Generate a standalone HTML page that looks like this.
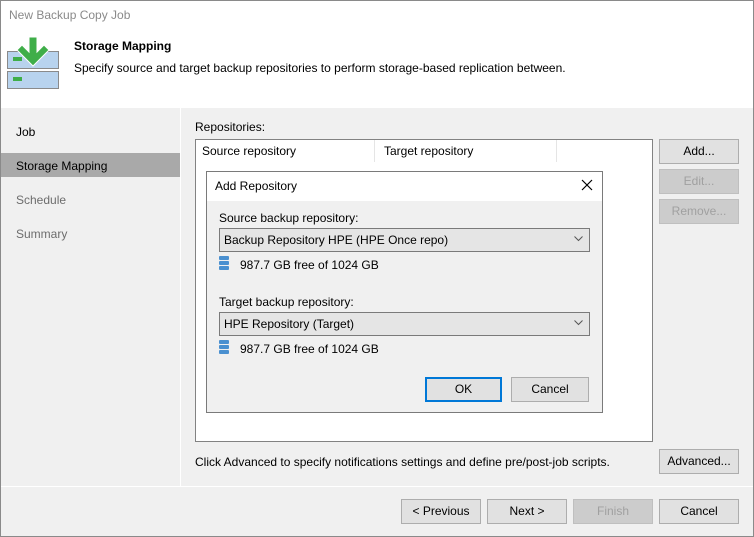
<!DOCTYPE html>
<html><head><style>
*{box-sizing:border-box;margin:0;padding:0}
body{width:754px;height:537px;overflow:hidden;font-family:"Liberation Sans",sans-serif;font-size:12px;color:#000;background:#f0f0f0;position:relative}
.a{position:absolute}
.btn{position:absolute;height:25px;border:1px solid #adadad;background:#e1e1e1;text-align:center;line-height:23px;font-size:12px}
.dis{color:#a0a0a0;background:#cccccc;border-color:#bfbfbf}
.sel{position:absolute;height:24px;border:1px solid #7a7a7a;background:#e5e5e5;line-height:22px;padding-left:4px}
.chev{position:absolute;right:6px;top:7px}
</style></head><body>
<div class="a" style="left:0;top:0;width:754px;height:537px;border:1px solid #8a8a8a"></div>
<div class="a" style="left:1px;top:1px;width:752px;height:107px;background:#fff"></div>
<div class="a" style="left:9px;top:8px;color:#8a8a8a;font-size:12px">New Backup Copy Job</div>
<svg class="a" style="left:6px;top:36px" width="54" height="54" viewBox="0 0 54 54">
<rect x="1.5" y="15.5" width="51" height="17" fill="#b8d3ee" stroke="#8a8a8a"/>
<rect x="1.5" y="35.5" width="51" height="17" fill="#b8d3ee" stroke="#8a8a8a"/>
<rect x="7" y="21" width="9" height="4" fill="#3fae49"/>
<rect x="7" y="41" width="9" height="4" fill="#3fae49"/>
<path d="M23 1h8v15l7-7 5 5-16 16-16-16 5-5 7 7z" fill="#3fae49" stroke="#fff" stroke-width="1"/>
</svg>
<div class="a" style="left:74px;top:39px;font-weight:bold">Storage Mapping</div>
<div class="a" style="left:74px;top:61px">Specify source and target backup repositories to perform storage-based replication between.</div>
<div class="a" style="left:180px;top:108px;width:1px;height:378px;background:#fff"></div>
<div class="a" style="left:1px;top:153px;width:179px;height:24px;background:#a9a9a9"></div>
<div class="a" style="left:16px;top:125px">Job</div>
<div class="a" style="left:16px;top:159px">Storage Mapping</div>
<div class="a" style="left:16px;top:193px;color:#6d6d6d">Schedule</div>
<div class="a" style="left:16px;top:227px;color:#6d6d6d">Summary</div>
<div class="a" style="left:195px;top:120px">Repositories:</div>
<div class="a" style="left:195px;top:139px;width:458px;height:303px;background:#fff;border:1px solid #828282"></div>
<div class="a" style="left:202px;top:144px">Source repository</div>
<div class="a" style="left:374px;top:140px;width:1px;height:22px;background:#e5e5e5"></div>
<div class="a" style="left:384px;top:144px">Target repository</div>
<div class="a" style="left:556px;top:140px;width:1px;height:22px;background:#e5e5e5"></div>
<div class="btn" style="left:659px;top:139px;width:80px">Add...</div>
<div class="btn dis" style="left:659px;top:169px;width:80px">Edit...</div>
<div class="btn dis" style="left:659px;top:199px;width:80px">Remove...</div>
<div class="a" style="left:206px;top:171px;width:397px;height:242px;background:#f0f0f0;border:1px solid #7a7a7a"></div>
<div class="a" style="left:207px;top:172px;width:395px;height:29px;background:#fff"></div>
<div class="a" style="left:215px;top:179px">Add Repository</div>
<svg class="a" style="left:581px;top:179px" width="12" height="12"><path d="M1 1L11 11M11 1L1 11" stroke="#000" stroke-width="1.2"/></svg>
<div class="a" style="left:219px;top:211px">Source backup repository:</div>
<div class="sel" style="left:219px;top:228px;width:371px">Backup Repository HPE (HPE Once repo)<svg class="chev" width="9" height="6"><path d="M0.5 0.5L4.5 4.5L8.5 0.5" stroke="#555" fill="none"/></svg></div>
<svg class="a" style="left:219px;top:256px" width="10" height="15"><rect y="0" width="10" height="4" rx="1" fill="#4a90d0"/><rect y="5" width="10" height="4" rx="1" fill="#4a90d0"/><rect y="10" width="10" height="4" rx="1" fill="#4a90d0"/></svg>
<div class="a" style="left:240px;top:258px">987.7 GB free of 1024 GB</div>
<div class="a" style="left:219px;top:295px">Target backup repository:</div>
<div class="sel" style="left:219px;top:312px;width:371px">HPE Repository (Target)<svg class="chev" width="9" height="6"><path d="M0.5 0.5L4.5 4.5L8.5 0.5" stroke="#555" fill="none"/></svg></div>
<svg class="a" style="left:219px;top:340px" width="10" height="15"><rect y="0" width="10" height="4" rx="1" fill="#4a90d0"/><rect y="5" width="10" height="4" rx="1" fill="#4a90d0"/><rect y="10" width="10" height="4" rx="1" fill="#4a90d0"/></svg>
<div class="a" style="left:240px;top:342px">987.7 GB free of 1024 GB</div>
<div class="btn" style="left:425px;top:377px;width:77px;border:2px solid #0078d7;line-height:21px">OK</div>
<div class="btn" style="left:511px;top:377px;width:78px">Cancel</div>
<div class="a" style="left:195px;top:455px">Click Advanced to specify notifications settings and define pre/post-job scripts.</div>
<div class="btn" style="left:659px;top:449px;width:80px">Advanced...</div>
<div class="a" style="left:1px;top:486px;width:752px;height:1px;background:#fff"></div>
<div class="btn" style="left:401px;top:499px;width:80px">&lt; Previous</div>
<div class="btn" style="left:487px;top:499px;width:80px">Next &gt;</div>
<div class="btn dis" style="left:573px;top:499px;width:80px">Finish</div>
<div class="btn" style="left:659px;top:499px;width:80px">Cancel</div>
</body></html>
